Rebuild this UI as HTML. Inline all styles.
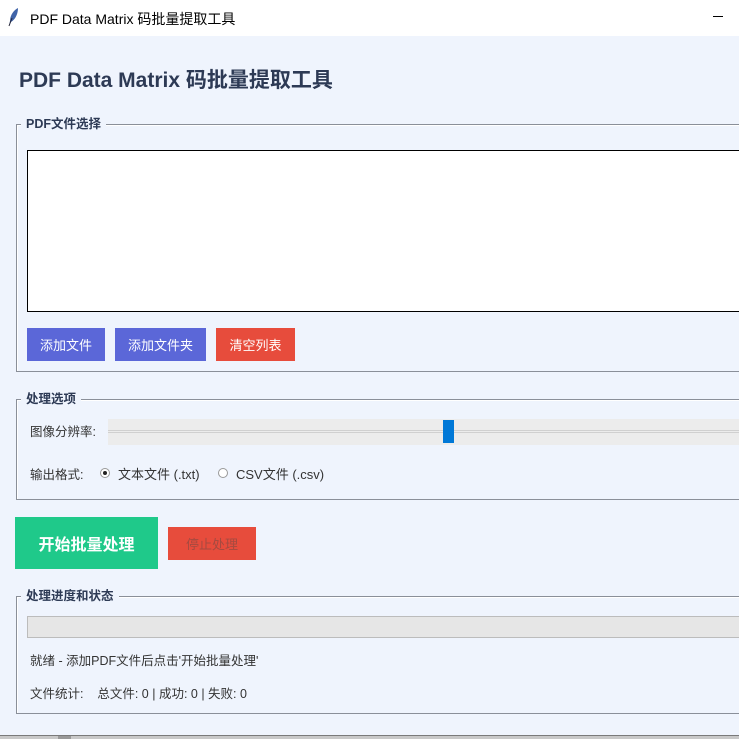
<!DOCTYPE html>
<html><head><meta charset="utf-8"><style>
*{margin:0;padding:0;box-sizing:border-box}
body{width:739px;height:739px;overflow:hidden;background:#eff4fd;font-family:"Liberation Sans","Noto Sans CJK SC",sans-serif;position:relative;color:#333}
.a{position:absolute}
.fs{position:absolute;border:1px solid #8a8f99;border-right:none;box-shadow:inset 1px 1px 0 #fff}
.lg{position:absolute;background:#eff4fd;padding:0 5px;font-size:12.5px;font-weight:bold;color:#2d3a55;line-height:14px}
.btn{position:absolute;color:#fff;font-size:13px;display:flex;align-items:center;justify-content:center}
.t{position:absolute;font-size:12.5px;color:#333;line-height:14px;white-space:nowrap}
</style></head><body>
<div class="a" style="left:0;top:0;width:739px;height:36px;background:#fff"></div>
<svg class="a" style="left:6px;top:7px" width="14" height="20" viewBox="0 0 14 20"><path d="M3 19 L4 14 C4 8 8 3 12 1 C12 6 10 12 5 15 Z" fill="#3f63a8"/><path d="M3 19 L6 11" stroke="#223" stroke-width="1"/></svg>
<div class="a" style="left:30px;top:9px;font-size:14px;color:#000">PDF Data Matrix 码批量提取工具</div>
<div class="a" style="left:713px;top:16px;width:10px;height:1px;background:#000"></div>
<div class="a" style="left:19px;top:64px;font-size:21px;font-weight:bold;color:#2d3a55">PDF Data Matrix 码批量提取工具</div>

<div class="fs" style="left:16px;top:124px;width:730px;height:248px"></div>
<div class="lg" style="left:21px;top:117px">PDF文件选择</div>
<div class="a" style="left:27px;top:150px;width:720px;height:162px;background:#fff;border:1px solid #000"></div>
<div class="btn" style="left:27px;top:328px;width:78px;height:33px;background:#5b67d8">添加文件</div>
<div class="btn" style="left:115px;top:328px;width:91px;height:33px;background:#5b67d8">添加文件夹</div>
<div class="btn" style="left:216px;top:328px;width:79px;height:33px;background:#e74c3c">清空列表</div>

<div class="fs" style="left:16px;top:399px;width:730px;height:101px"></div>
<div class="lg" style="left:21px;top:392px">处理选项</div>
<div class="t" style="left:30px;top:425px">图像分辨率:</div>
<div class="a" style="left:108px;top:419px;width:640px;height:26px;background:#ececec"></div>
<div class="a" style="left:108px;top:430px;width:640px;height:3px;border-top:1px solid #d0d0d0;border-bottom:1px solid #d0d0d0"></div>
<div class="a" style="left:443px;top:420px;width:11px;height:23px;background:#0078d7"></div>
<div class="t" style="left:30px;top:468px">输出格式:</div>
<div class="a" style="left:100px;top:468px;width:10px;height:10px;border-radius:50%;border:1px solid #999;background:#fff"></div>
<div class="a" style="left:103px;top:471px;width:4px;height:4px;border-radius:50%;background:#222"></div>
<div class="t" style="left:118px;top:468px;font-size:13px">文本文件 (.txt)</div>
<div class="a" style="left:218px;top:468px;width:10px;height:10px;border-radius:50%;border:1px solid #999;background:#fff"></div>
<div class="t" style="left:236px;top:468px;font-size:13px">CSV文件 (.csv)</div>

<div class="btn" style="left:15px;top:517px;width:143px;height:52px;background:#1fc98a;font-size:16px;font-weight:bold">开始批量处理</div>
<div class="btn" style="left:168px;top:527px;width:88px;height:33px;background:#e74c3c;color:#a54a40">停止处理</div>

<div class="fs" style="left:16px;top:596px;width:730px;height:118px"></div>
<div class="lg" style="left:21px;top:589px">处理进度和状态</div>
<div class="a" style="left:27px;top:616px;width:720px;height:22px;background:#e6e6e6;border:1px solid #bcbcbc"></div>
<div class="t" style="left:30px;top:654px">就绪 - 添加PDF文件后点击'开始批量处理'</div>
<div class="t" style="left:30px;top:687px">文件统计:&nbsp;&nbsp;&nbsp; 总文件: 0 | 成功: 0 | 失败: 0</div>

<div class="a" style="left:0;top:735px;width:739px;height:1px;background:#7a7a7a"></div>
<div class="a" style="left:0;top:736px;width:739px;height:3px;background:#c8c8c8"></div>
<div class="a" style="left:58px;top:736px;width:13px;height:3px;background:#999"></div>
</body></html>
